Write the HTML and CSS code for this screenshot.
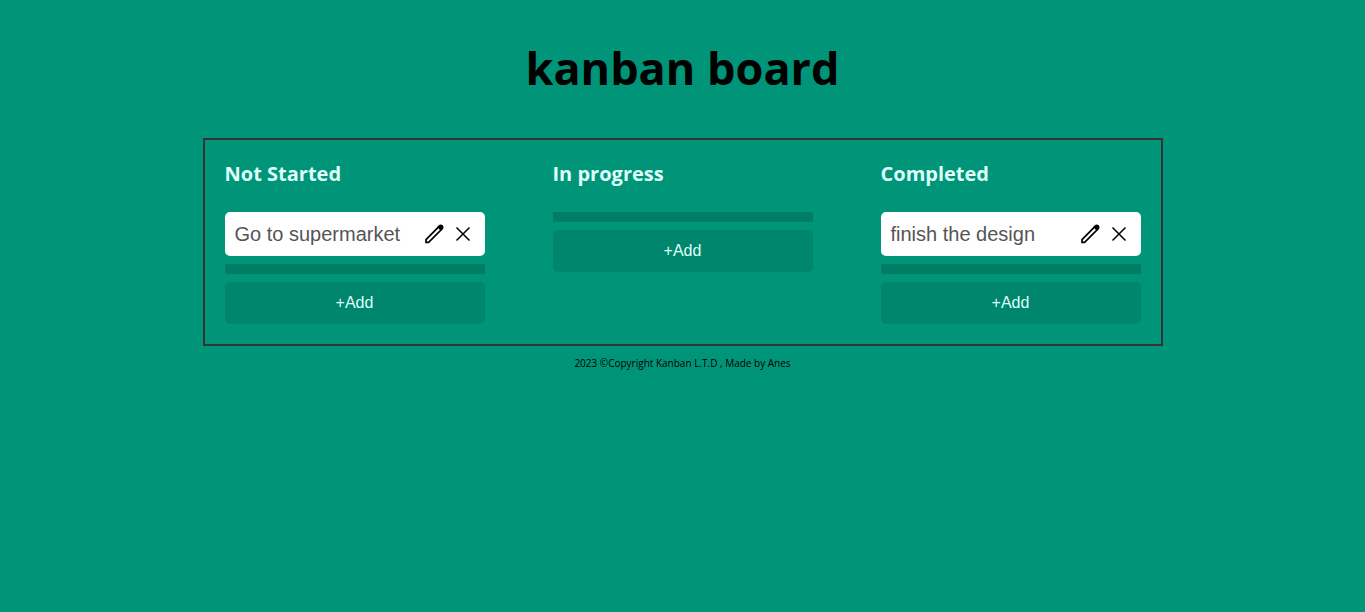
FILE: index.html
```html
<!DOCTYPE html>
<html lang="en">
<head>
<meta charset="utf-8">
<meta name="viewport" content="width=device-width, initial-scale=1">
<title>kanban board</title>
<link rel="stylesheet" href="styles.css">
</head>
<body>
<svg class="sprite" aria-hidden="true">
  <symbol id="pencil" viewBox="0 0 22 22">
    <path fill="none" stroke="currentColor" stroke-width="1.7" stroke-linejoin="miter" d="M15.6 3.8 3 16.6V19.4H5.6L18.4 6.6z"/>
    <path fill="currentColor" d="M14.2 4 16.6 1.8Q18 .8 19.6 2.3T20.2 5.4L17.8 7.8z"/>
  </symbol>
  <symbol id="cross" viewBox="0 0 22 22">
    <path fill="none" stroke="currentColor" stroke-width="1.5" d="M4.5 4.5l13 13M17.5 4.5l-13 13"/>
  </symbol>
</svg>
<header>
  <h1 class="title">kanban board</h1>
</header>
<main class="board">
  <section class="column">
    <h2 class="column-title">Not Started</h2>
    <div class="items">
      <article class="card">
        <span class="card-text">Go to supermarket</span>
        <button class="icon-button" type="button" aria-label="Edit"><svg class="icon"><use href="#pencil"/></svg></button>
        <button class="icon-button" type="button" aria-label="Delete"><svg class="icon"><use href="#cross"/></svg></button>
      </article>
      <div class="dropzone"></div>
      <button class="add" type="button">+Add</button>
    </div>
  </section>
  <section class="column">
    <h2 class="column-title">In progress</h2>
    <div class="items">
      <div class="dropzone"></div>
      <button class="add" type="button">+Add</button>
    </div>
  </section>
  <section class="column">
    <h2 class="column-title">Completed</h2>
    <div class="items">
      <article class="card">
        <span class="card-text">finish the design</span>
        <button class="icon-button" type="button" aria-label="Edit"><svg class="icon"><use href="#pencil"/></svg></button>
        <button class="icon-button" type="button" aria-label="Delete"><svg class="icon"><use href="#cross"/></svg></button>
      </article>
      <div class="dropzone"></div>
      <button class="add" type="button">+Add</button>
    </div>
  </section>
</main>
<footer class="footer">2023 ©Copyright Kanban L.T.D , Made by Anes</footer>
</body>
</html>
```
FILE: styles.css
```css
* {
  box-sizing: border-box;
}

body {
  margin: 0;
  background: #009579;
  color: #000;
  font-family: "Open Sans", sans-serif;
}

.sprite {
  display: none;
}

.title {
  margin: 36px 0 38px;
  font-size: 45px;
  line-height: 64px;
  font-weight: 700;
  text-align: center;
}

.board {
  display: flex;
  justify-content: space-between;
  gap: 20px;
  max-width: 960px;
  margin: 0 auto;
  padding: 20px;
  border: 2px solid #333;
}

.column {
  flex: 0 1 260px;
}

.column-title {
  margin: 0 0 24px;
  color: #dffff9;
  font-size: 20px;
  line-height: 28px;
  font-weight: 700;
}

.items {
  display: flex;
  flex-direction: column;
  gap: 8px;
}

.card {
  display: flex;
  align-items: center;
  gap: 7px;
  padding: 10px 11px 10px 10px;
  border-radius: 5px;
  background: #fff;
}

.card-text {
  flex: 1;
  color: #555;
  font-family: "Liberation Sans", Arial, sans-serif;
  font-size: 20px;
  line-height: 24px;
}

.icon-button {
  display: flex;
  padding: 0;
  border: 0;
  background: none;
  color: #000;
  cursor: pointer;
}

.icon {
  width: 22px;
  height: 22px;
}

.dropzone {
  height: 10px;
  background: #007d65;
}

.add {
  padding: 12px;
  border: 0;
  border-radius: 5px;
  background: #00866d;
  color: #dffff9;
  font-family: "Liberation Sans", Arial, sans-serif;
  font-size: 16px;
  line-height: 18px;
  cursor: pointer;
}

.footer {
  padding: 10px;
  font-size: 10px;
  line-height: 14px;
  font-weight: 500;
  text-align: center;
}
```
